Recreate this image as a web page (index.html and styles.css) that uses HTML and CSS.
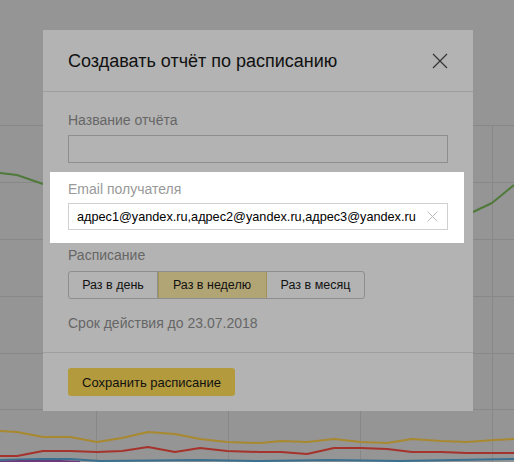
FILE: index.html
```html
<!DOCTYPE html>
<html lang="ru">
<head>
<meta charset="utf-8">
<link rel="stylesheet" href="styles.css">
</head>
<body>
<div class="page">
  <svg class="chart" width="514" height="462" viewBox="0 0 514 462">
    <g stroke="#888" stroke-width="1" fill="none">
      <line x1="0" y1="125.5" x2="514" y2="125.5"/>
      <line x1="0" y1="182.5" x2="514" y2="182.5"/>
      <line x1="0" y1="239.5" x2="514" y2="239.5"/>
      <line x1="0" y1="296.5" x2="514" y2="296.5"/>
      <line x1="0" y1="353.5" x2="514" y2="353.5"/>
      <line x1="0" y1="409.5" x2="514" y2="409.5"/>
      <line x1="96.5" y1="125" x2="96.5" y2="462"/>
      <line x1="228.5" y1="125" x2="228.5" y2="462"/>
      <line x1="360.5" y1="125" x2="360.5" y2="462"/>
      <line x1="492.5" y1="125" x2="492.5" y2="462"/>
    </g>
    <g fill="none" stroke-width="2" stroke-linejoin="round">
      <polyline stroke="#4f7a3a" points="0,173 17,175 43,184"/>
      <polyline stroke="#4f7a3a" points="473,212 492,203 514,185"/>
      <polyline stroke="#a8892f" points="0,431 17,432 43,437 70,437 97,442 122,438 148,432 175,434 200,439 227,442 260,443 281,441 307,442 334,439 361,442 387,443 412,439 441,441 467,442 494,440 514,439"/>
      <polyline stroke="#a5332c" points="0,456 17,456 43,451 70,451 97,452 122,451 148,447 175,452 200,448 227,451 260,452 281,452 307,454 334,448 361,448 387,449 412,452 441,452 467,453 494,453 514,453"/>
      <polyline stroke="#3a6f8f" points="0,460 40,459 70,459 100,461 200,460 260,461 330,460 400,461 514,459"/>
      <polyline stroke="#6a3a7a" points="0,462 20,461 60,461 80,462"/>
    </g>
  </svg>

  <div class="dialog">
    <div class="dialog-head">
      <h1 class="dialog-title">Создавать отчёт по расписанию</h1>
      <svg class="close" width="16" height="16" viewBox="0 0 16 16">
        <path d="M1 1 L15 15 M15 1 L1 15" stroke="#333" stroke-width="1.2" fill="none"/>
      </svg>
    </div>
    <div class="dialog-body">
      <div class="field">
        <div class="label">Название отчёта</div>
        <div class="input"></div>
      </div>
      <div class="spot">
        <div class="label">Email получателя</div>
        <div class="input input-white">
          <span class="value">адрес1@yandex.ru,адрес2@yandex.ru,адрес3@yandex.ru</span>
          <svg class="clear" width="11" height="11" viewBox="0 0 11 11">
            <path d="M0.5 0.5 L10.5 10.5 M10.5 0.5 L0.5 10.5" stroke="#bbb" stroke-width="1" fill="none"/>
          </svg>
        </div>
      </div>
      <div class="field field-schedule">
        <div class="label">Расписание</div>
        <div class="radio">
          <span class="radio-btn">Раз в день</span>
          <span class="radio-btn radio-on">Раз в неделю</span>
          <span class="radio-btn">Раз в месяц</span>
        </div>
      </div>
      <div class="expire">Срок действия до 23.07.2018</div>
    </div>
    <div class="dialog-foot">
      <button class="save">Сохранить расписание</button>
    </div>
  </div>
</div>
</body>
</html>
```
FILE: styles.css
```css
html, body {
  margin: 0;
  padding: 0;
}
body {
  background: #959595;
  font-family: "Liberation Sans", Arial, sans-serif;
  width: 514px;
  height: 462px;
  overflow: hidden;
}
.page {
  position: relative;
  width: 514px;
  height: 462px;
  padding-top: 30px;
  box-sizing: border-box;
}
.chart {
  position: absolute;
  left: 0;
  top: 0;
}
.dialog {
  position: relative;
  margin-left: 43px;
  width: 430px;
  height: 381px;
  background: #b3b3b3;
  display: flex;
  flex-direction: column;
}
.dialog-head {
  height: 61px;
  border-bottom: 1px solid #9e9e9e;
  display: flex;
  align-items: center;
  justify-content: space-between;
  padding: 0 25px 0 25px;
}
.dialog-title {
  margin: 0;
  font-size: 18px;
  font-weight: normal;
  color: #111;
  padding-top: 1px;
}
.close {
  margin-top: 1px;
}
.dialog-body {
  padding: 18px 25px 0 25px;
  flex: 1;
  border-bottom: 1px solid #9e9e9e;
}
.label {
  font-size: 14px;
  line-height: 20px;
  color: #666;
  height: 20px;
}
.input {
  margin-top: 5px;
  width: 380px;
  height: 28px;
  box-sizing: border-box;
  border: 1px solid #8e8e8e;
}
.spot {
  margin: 9px -16px 0 -18px;
  padding: 7px 16px 13px 18px;
  background: #fff;
}
.spot .label {
  color: #999;
}
.input-white {
  margin-top: 4px;
  height: 27px;
  border-color: #d0d0d0;
  display: flex;
  align-items: center;
  justify-content: space-between;
  padding: 0 9px 0 8px;
}
.value {
  font-size: 12.7px;
  color: #000;
}
.clear {
  display: block;
}
.field-schedule {
  margin-top: 2px;
}
.radio {
  margin-top: 6px;
  display: flex;
  width: max-content;
  height: 28px;
  border: 1px solid #8e8e8e;
  border-radius: 3px;
  box-sizing: border-box;
  overflow: hidden;
}
.radio-btn {
  display: flex;
  align-items: center;
  justify-content: center;
  font-size: 12.5px;
  color: #111;
  white-space: nowrap;
  box-sizing: border-box;
  border-right: 1px solid #8e8e8e;
}
.radio-btn:nth-child(1) { width: 89px; }
.radio-btn:nth-child(2) { width: 109px; }
.radio-btn:nth-child(3) { width: 97px; border-right: 0; }
.radio-on {
  background: #b2a575;
  border-right: 1px solid #a29359;
  box-shadow: inset 1px 0 0 #a29359;
}
.expire {
  margin-top: 14px;
  font-size: 14px;
  line-height: 20px;
  color: #666;
}
.dialog-foot {
  height: 58px;
  padding: 15px 25px 0 25px;
  box-sizing: border-box;
}
.save {
  display: block;
  width: 167px;
  height: 28px;
  border: 0;
  border-radius: 3px;
  background: #b39a3d;
  font-family: "Liberation Sans", Arial, sans-serif;
  font-size: 13px;
  color: #111;
  padding: 0;
  margin: 0;
}
```
